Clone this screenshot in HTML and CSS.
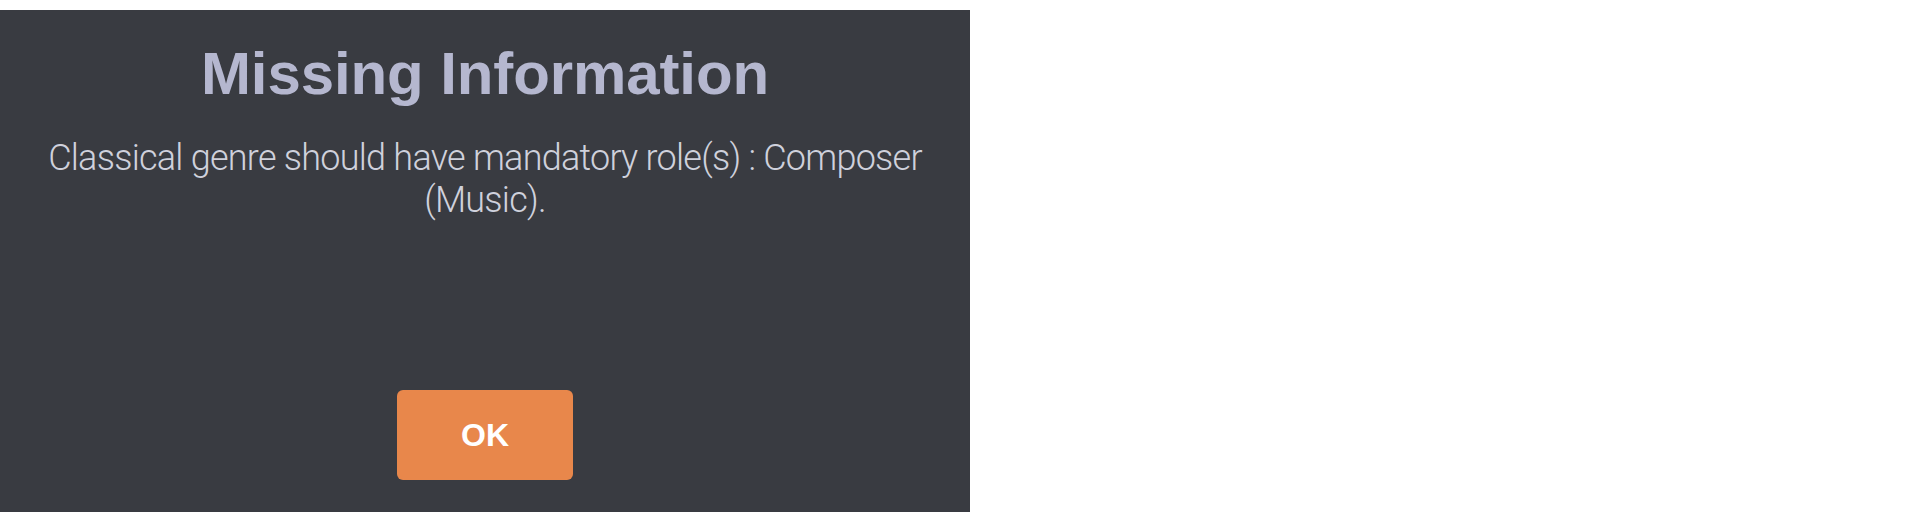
FILE: index.html
```html
<!DOCTYPE html>
<html lang="en">
<head>
<meta charset="utf-8">
<title>Missing Information</title>
<link rel="stylesheet" href="styles.css">
</head>
<body>
<div class="dialog">
  <h1 class="dialog-title">Missing Information</h1>
  <p class="dialog-message">Classical genre should have mandatory role(s) : Composer (Music).</p>
  <div class="dialog-actions">
    <button class="btn-ok" type="button">OK</button>
  </div>
</div>
</body>
</html>
```
FILE: styles.css
```css
html, body {
  margin: 0;
  padding: 0;
  background: #ffffff;
}
body {
  padding-top: 10px;
}
.dialog {
  width: 970px;
  height: 502px;
  box-sizing: border-box;
  background: #393b41;
  display: flex;
  flex-direction: column;
  align-items: center;
  padding: 29px 30px 32px;
}
.dialog-title {
  margin: 0;
  font-family: "Liberation Sans", Arial, sans-serif;
  font-weight: 700;
  font-size: 60px;
  line-height: 70px;
  letter-spacing: -0.1px;
  color: #b5b7cf;
  text-align: center;
}
.dialog-message {
  margin: 28px 0 0;
  font-family: Roboto, "Liberation Sans", sans-serif;
  font-weight: 300;
  font-size: 36px;
  line-height: 42px;
  letter-spacing: -0.75px;
  color: #cfd1dc;
  text-align: center;
}
.dialog-actions {
  margin-top: auto;
  display: flex;
  justify-content: center;
}
.btn-ok {
  width: 176px;
  height: 90px;
  border: none;
  border-radius: 6px;
  background: #e8874b;
  color: #ffffff;
  font-family: "Liberation Sans", Arial, sans-serif;
  font-weight: 700;
  font-size: 32px;
  padding: 0;
  cursor: pointer;
}
```
